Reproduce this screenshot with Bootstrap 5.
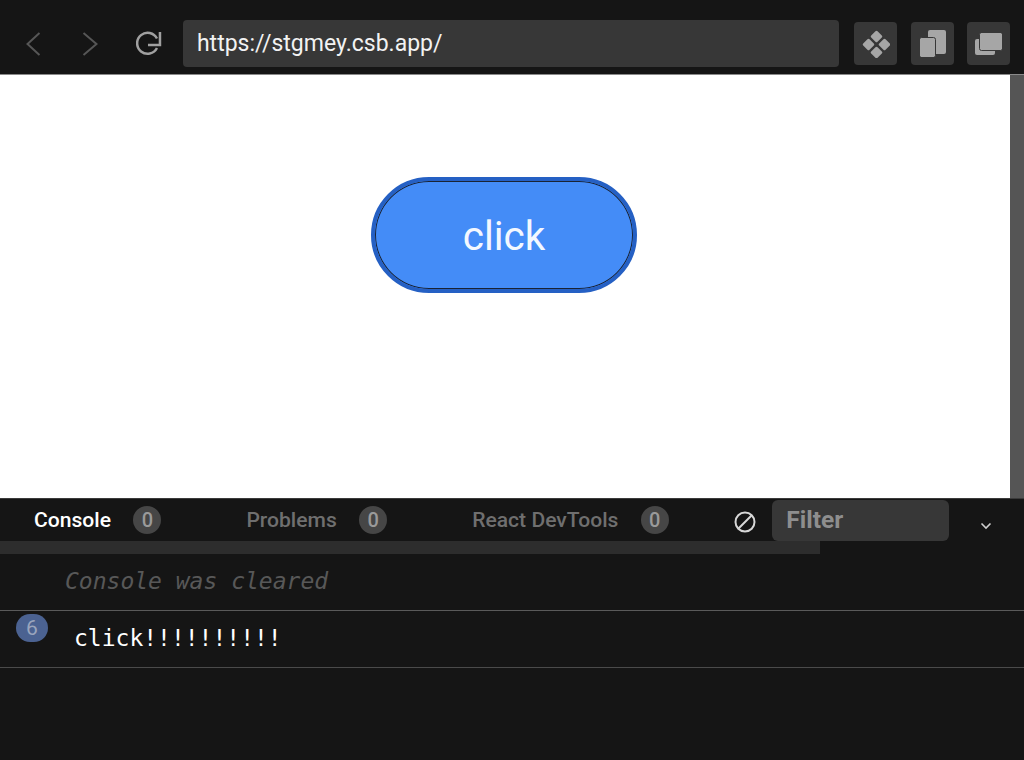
<!DOCTYPE html>
<html lang="en">
<head>
<meta charset="utf-8">
<title>Sandbox</title>
<link href="https://cdn.jsdelivr.net/npm/bootstrap@5.3.0/dist/css/bootstrap.min.css" rel="stylesheet">
<style>
html,body{height:760px;overflow:hidden;background:#151515;font-family:Roboto,sans-serif}
.app-shell{width:1024px;height:760px}
.top-bar{height:75px;background:#151515;border-bottom:1px solid #8a8a8a;padding:20px 14px 8px 26px}
.nav-arrow{width:16px;height:26px;display:block;margin-top:11px}
.nav-back{margin-right:40px}
.nav-fwd{margin-right:38px}
.nav-reload{width:26px;height:28px;margin-top:10px;margin-right:21px;display:block}
.url-box{width:657px;height:47px;background:#373737;border-radius:4px;color:#f2f2f2;font-size:23px;line-height:47px;padding-left:14px;margin-right:15px}
.tool-btn{width:43px;height:43px;background:#373737;border-radius:4px;margin-right:14px;margin-top:2px}
.tool-mid{margin-right:13px}
.tool-btn:last-child{margin-right:0}
.view-row{height:423px;background:#fff}
.page-area{width:1010px;padding:102px 2px 0 0}
.scroll-v{width:14px;background:#555}
.click-btn{width:266px;height:116px;border-radius:58px;border:4px solid #2560c4;background:#448cf7;color:#f3f8ff;font-size:40.5px;box-shadow:inset 0 0 0 1px #1a2333;padding:2px 0 0;flex-shrink:0}
.tab-row{height:43px;border-top:1px solid #3a3a3a;background:#151515;padding-left:34px}
.tab-name{font-size:21.1px;font-weight:500;color:#6f6f6f}
.tab-on{color:#fff}
.tab-count{width:28px;height:28px;border-radius:50%;background:#464646;color:#9a9a9a;font-size:20px;font-weight:500;margin-left:22.400px;margin-right:85px}
.tab-last{margin-right:65.500px}
.clear-icon{width:22px;height:22px;margin-top:4px;margin-right:16px;display:block}
.filter-box{width:177px;height:41px;background:#373737;border-radius:6px;margin-top:1px;align-self:flex-start;color:#8e8e8e;font-size:24.5px;font-weight:700;line-height:39px;padding-left:14px}
.chev-icon{width:12px;height:8px;margin-left:31px;margin-top:12px;display:block}
.scroll-h{height:13px;width:820px;background:#2d2d2d}
.log-line{font-family:"DejaVu Sans Mono",monospace;font-size:23px}
.log-clear{height:57px;border-bottom:1px solid #5a5a5a;color:#585858;font-style:italic;padding-left:65px;line-height:54px}
.log-msg{height:57px;border-bottom:1px solid #4a4a4a;color:#fff;padding-left:16px;line-height:54px}
.log-count{width:32px;height:28px;border-radius:14px;background:#4b6291;color:#9aa5bd;font-family:Roboto,sans-serif;font-size:21px;line-height:28px;margin-top:3px;margin-right:26px}
</style>
</head>
<body class="m-0">
<div class="app-shell d-flex flex-column">
  <header class="top-bar d-flex align-items-start flex-shrink-0">
    <svg class="nav-arrow nav-back" viewBox="0 0 16 26" fill="none" stroke="#565656" stroke-width="2"><path d="M13.500 2 1.500 13 13.500 24"/></svg>
    <svg class="nav-arrow nav-fwd" viewBox="0 0 16 26" fill="none" stroke="#565656" stroke-width="2"><path d="M1.500 2 14.500 13 1.500 24"/></svg>
    <svg class="nav-reload" viewBox="0 0 26 28" fill="none" stroke="#a0a0a0" stroke-width="2.500"><path d="M21 18A10.500 10.500 0 1 1 21 8.500"/><path d="M24 2v13H12"/></svg>
    <div class="url-box">https://stgmey.csb.app/</div>
    <div class="tool-btn d-flex align-items-center justify-content-center">
      <svg width="28" height="28" viewBox="0 0 28 28" fill="#a6a6a6"><rect x="10" y="2" width="9" height="9" rx="1.500" transform="rotate(45 14.500 6.500)"/><rect x="2" y="10" width="9" height="9" rx="1.500" transform="rotate(45 6.500 14.500)"/><rect x="18" y="10" width="9" height="9" rx="1.500" transform="rotate(45 22.500 14.500)"/><rect x="10" y="18" width="9" height="9" rx="1.500" transform="rotate(45 14.500 22.500)"/></svg>
    </div>
    <div class="tool-btn tool-mid d-flex align-items-center justify-content-center">
      <svg width="26" height="27" viewBox="0 0 26 27" fill="#a6a6a6" stroke="#373737"><rect x="8" y="0" width="18" height="24" rx="2" stroke="none"/><rect x="-.5" y="7.500" width="16" height="20" rx="2"/></svg>
    </div>
    <div class="tool-btn d-flex align-items-center justify-content-center">
      <svg width="27" height="22" viewBox="0 0 27 22" fill="#a6a6a6" stroke="#373737"><rect x="0" y="6" width="20" height="16" rx="2" stroke="none"/><rect x="4.500" y="-.5" width="23" height="18" rx="2"/></svg>
    </div>
  </header>
  <section class="view-row d-flex flex-shrink-0">
    <div class="page-area d-flex justify-content-center align-items-start">
      <button type="button" class="click-btn">click</button>
    </div>
    <div class="scroll-v"></div>
  </section>
  <nav class="tab-row d-flex align-items-center flex-shrink-0">
    <span class="tab-name tab-on">Console</span>
    <span class="tab-count d-flex align-items-center justify-content-center">0</span>
    <span class="tab-name">Problems</span>
    <span class="tab-count d-flex align-items-center justify-content-center">0</span>
    <span class="tab-name">React DevTools</span>
    <span class="tab-count tab-last d-flex align-items-center justify-content-center">0</span>
    <svg class="clear-icon" viewBox="0 0 22 22" fill="none" stroke="#d8d8d8" stroke-width="2"><circle cx="11" cy="11" r="9.500"/><path d="M4.500 17.500 17.500 4.500"/></svg>
    <div class="filter-box">Filter</div>
    <svg class="chev-icon" viewBox="0 0 12 8" fill="none" stroke="#cfcfcf" stroke-width="1.600"><path d="M1.500 1.500 6 6l4.500-4.500"/></svg>
  </nav>
  <div class="scroll-h flex-shrink-0"></div>
  <div class="log-line log-clear flex-shrink-0">Console was cleared</div>
  <div class="log-line log-msg d-flex align-items-start flex-shrink-0">
    <span class="log-count text-center">6</span>
    <span>click!!!!!!!!!!</span>
  </div>
</div>
<script src="https://cdn.jsdelivr.net/npm/bootstrap@5.3.0/dist/js/bootstrap.bundle.min.js"></script>
</body>
</html>
